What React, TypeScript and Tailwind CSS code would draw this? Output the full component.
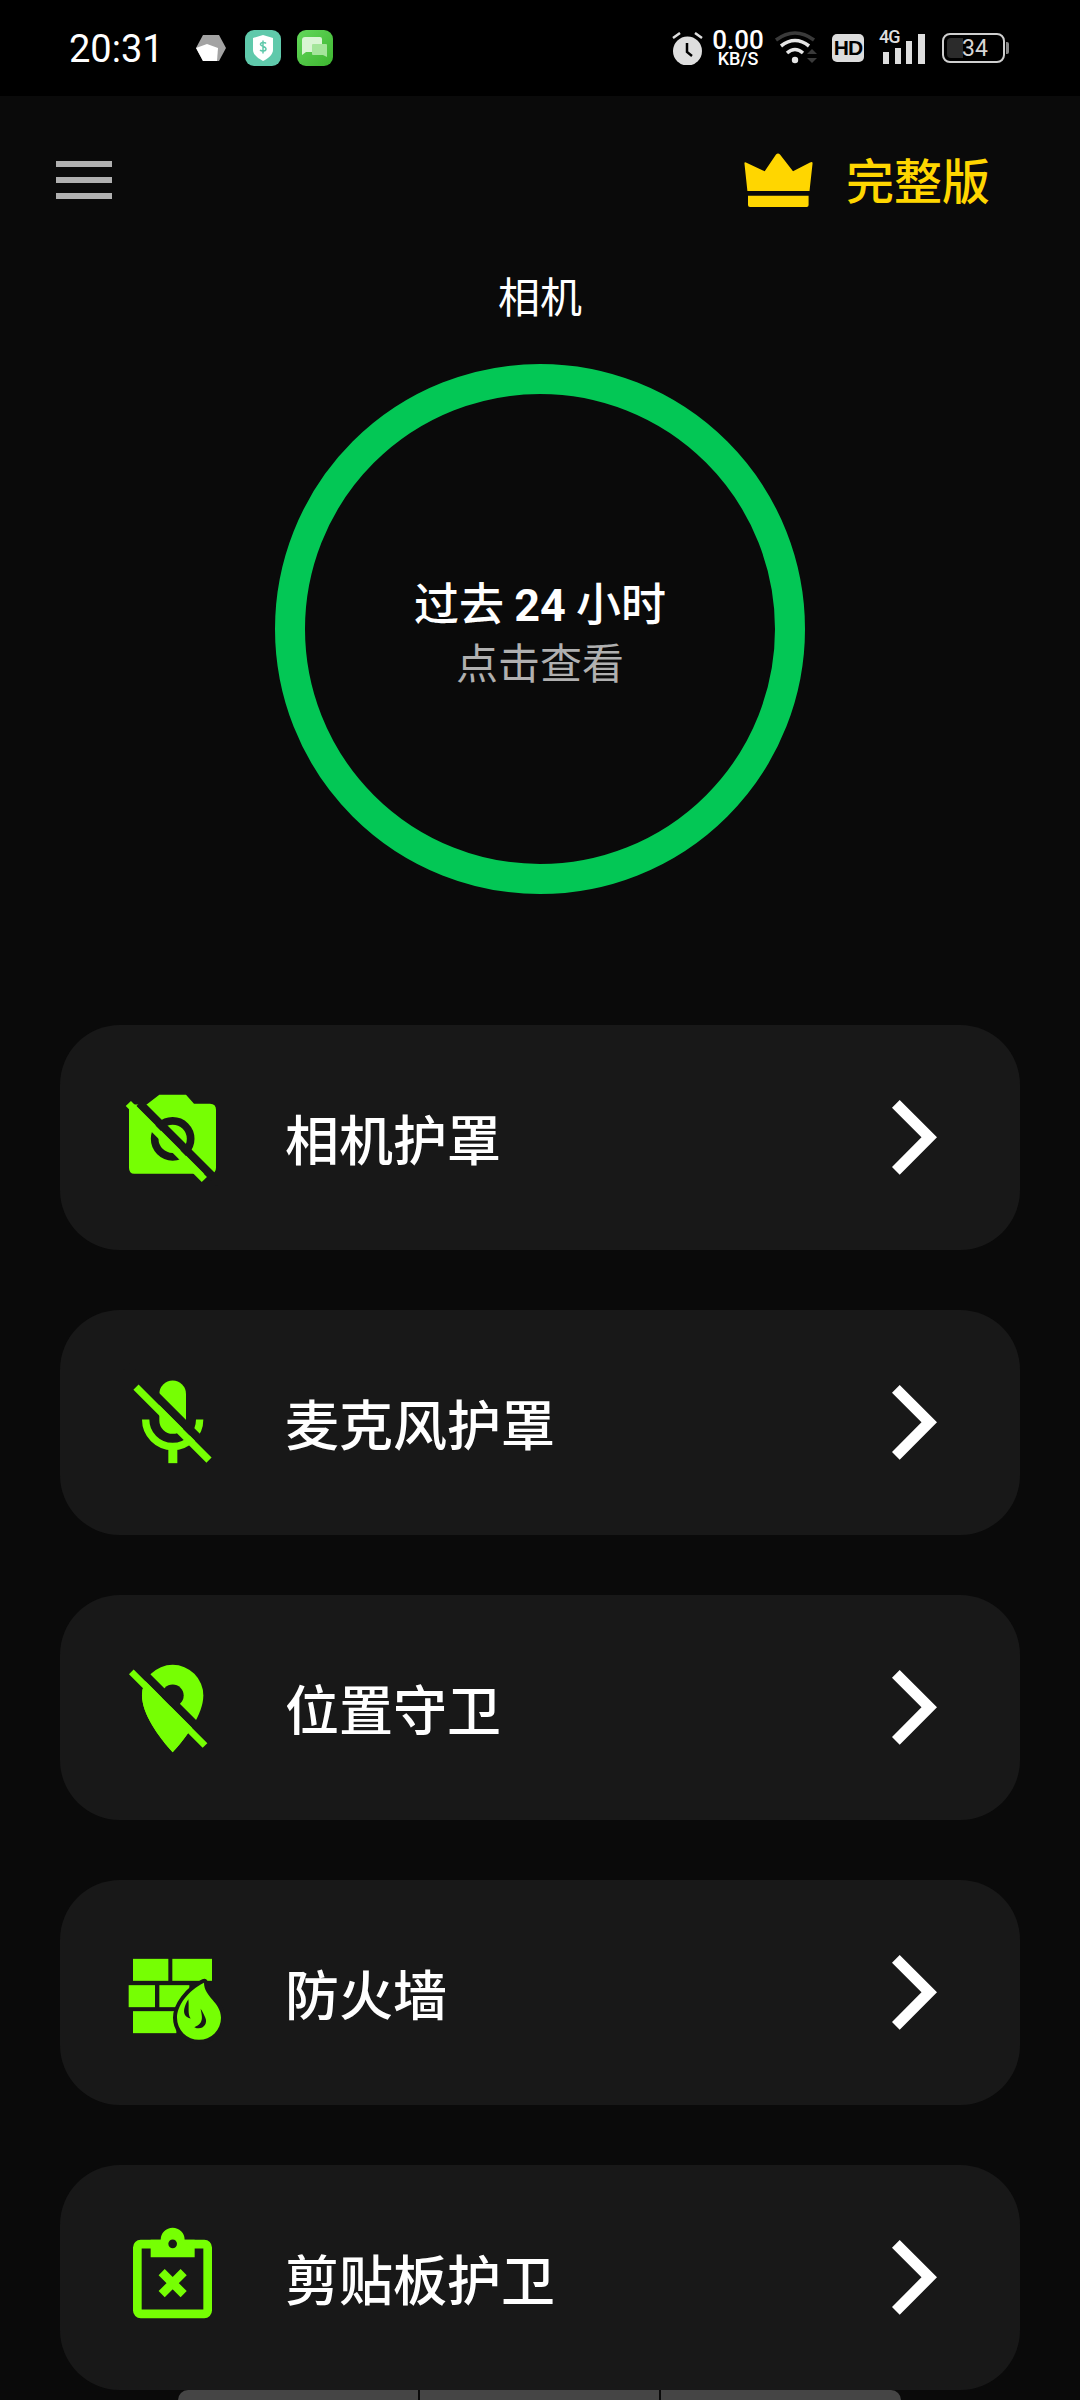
import React from "react";

const G = "#76FF03";
const C = "#181818";

function CameraIcon() {
  return (
    <svg viewBox="180 142.5 360 360" className="w-[120px] h-[120px] shrink-0">
      <path d="M298 193H378L402 220H450Q468 220 468 238V412Q468 430 450 430H223Q207 430 207 412V222H260Z" fill={G} />
      <circle cx="338" cy="325" r="54" fill="none" stroke={C} strokeWidth="23" />
      <line x1="238" y1="218" x2="478" y2="458" stroke={C} strokeWidth="25" />
      <line x1="205" y1="219" x2="433" y2="447" stroke={G} strokeWidth="22" />
    </svg>
  );
}

function MicIcon() {
  return (
    <svg viewBox="180 127.5 360 360" className="w-[120px] h-[120px] shrink-0">
      <rect x="298" y="180" width="80" height="160" rx="40" fill={G} />
      <path d="M257 297A81 81 0 0 0 419 297" fill="none" stroke={G} strokeWidth="22" />
      <rect x="325" y="378" width="27" height="50" fill={G} />
      <line x1="200" y1="138" x2="440" y2="378" stroke={C} strokeWidth="25" />
      <line x1="228" y1="200" x2="447" y2="419" stroke={G} strokeWidth="22" />
    </svg>
  );
}

function PinIcon() {
  return (
    <svg viewBox="180 142.5 360 360" className="w-[120px] h-[120px] shrink-0">
      <defs>
        <clipPath id="pinLower">
          <polygon points="160,146 480,466 160,466" />
        </clipPath>
      </defs>
      <path d="M338 193A92 92 0 0 1 430 285C430 340 380 410 338 455C296 410 246 340 246 285A92 92 0 0 1 338 193Z" fill={G} />
      <circle cx="338" cy="285" r="33" fill={C} />
      <path clipPath="url(#pinLower)" d="M338 193A92 92 0 0 1 430 285C430 340 380 410 338 455C296 410 246 340 246 285A92 92 0 0 1 338 193Z" fill={G} />
      <line x1="205" y1="173" x2="440" y2="408" stroke={C} strokeWidth="25" />
      <line x1="214" y1="214" x2="435" y2="435" stroke={G} strokeWidth="20" />
    </svg>
  );
}

function WallIcon() {
  return (
    <svg viewBox="180 97.5 360 360" className="w-[120px] h-[120px] shrink-0">
      <rect x="219" y="175" width="106" height="66" fill={G} />
      <rect x="337" y="175" width="119" height="66" fill={G} />
      <rect x="206" y="254" width="79" height="66" fill={G} />
      <rect x="298" y="254" width="90" height="66" fill={G} />
      <rect x="219" y="332" width="130" height="66" fill={G} />
      <path d="M432 247C432 290 483 305 483 352A66 66 0 0 1 351 352C351 315 385 270 432 247Z" fill={C} stroke={C} strokeWidth="24" strokeLinejoin="round" />
      <path d="M432 247C432 290 483 305 483 352A66 66 0 0 1 351 352C351 315 385 270 432 247Z" fill={G} />
      <path d="M385 296C372 318 362 346 392 354C382 340 388 320 385 296Z" fill={C} />
      <path d="M422 325C425 345 435 368 403 380C425 392 445 372 436 352C432 342 428 335 422 325Z" fill={C} />
    </svg>
  );
}

function ClipIcon() {
  return (
    <svg viewBox="180 82.5 360 360" className="w-[120px] h-[120px] shrink-0">
      <rect x="232" y="161" width="211" height="209" rx="10" fill="none" stroke={G} strokeWidth="26" />
      <path d="M272 148H302A36 36 0 0 1 374 148H404V200H272Z" fill={G} />
      <circle cx="338" cy="160" r="13" fill={C} />
      <path d="M305 245L371 311M371 245L305 311" stroke={G} strokeWidth="26" fill="none" />
    </svg>
  );
}

function Chevron() {
  return (
    <svg viewBox="0 0 45 75" className="w-[45px] h-[75px] shrink-0">
      <polygon points="7.7,0 45,37.3 7.7,74.7 0,67 29.5,37.3 0,7.7" fill="#ffffff" />
    </svg>
  );
}

const items: [React.ReactNode, string][] = [
  [<CameraIcon />, "相机护罩"],
  [<MicIcon />, "麦克风护罩"],
  [<PinIcon />, "位置守卫"],
  [<WallIcon />, "防火墙"],
  [<ClipIcon />, "剪贴板护卫"],
];

function StatusBar() {
  return (
    <div className="h-[96px] bg-black flex items-center justify-between pl-[69px] pr-[71px] shrink-0">
      <div className="flex items-center">
        <span className="text-[38px] leading-[40px] mt-[2px] text-white w-[93px] font-['Roboto',sans-serif]">20:31</span>
        <svg viewBox="0 0 30 26" className="w-[30px] h-[26px] ml-[34px]">
          <polygon points="7,0 23,0 30,13 23,26 7,26 0,13" fill="#a3a3a3" />
          <polygon points="0,13 11,9 22,13 21,26 7,26" fill="#ffffff" />
        </svg>
        <div className="w-[36px] h-[36px] rounded-[9px] bg-[#5fc9ab] ml-[19px] flex items-center justify-center">
          <svg viewBox="0 0 22 26" className="w-[22px] h-[26px]">
            <path d="M1 3L11 0L21 3V15C21 20 15 24 11 26C7 24 1 20 1 15Z" fill="#ffffff" />
            <path d="M14 8.5C13 7 9 7 8.5 9C8 11.5 14 11 14 14C14 16.5 9.5 16.5 8 15M11 5.5V18.5" fill="none" stroke="#5fc9ab" strokeWidth="1.5" />
          </svg>
        </div>
        <div className="w-[36px] h-[36px] rounded-[9px] bg-gradient-to-br from-[#63d85a] to-[#3db52f] ml-[16px] flex items-center justify-center">
          <svg viewBox="0 0 26 26" className="w-[26px] h-[26px]">
            <path d="M3 2H18Q20 2 20 4V15Q20 17 18 17H4L0 20V5Q0 2 3 2Z" fill="#d9f5d3" />
            <path d="M11 9H24Q25 9 25 10V22L21 20H11Q10 20 10 19V10Q10 9 11 9Z" fill="#a4e59a" />
          </svg>
        </div>
      </div>
      <div className="flex items-center">
        <svg viewBox="0 0 31 33" className="w-[31px] h-[33px]">
          <circle cx="15.5" cy="19" r="14.5" fill="#dedede" />
          <path d="M15 11V20L20 24" fill="none" stroke="#000000" strokeWidth="2.5" />
          <path d="M1 6L8 1M30 6L23 1" stroke="#dedede" strokeWidth="2.5" />
        </svg>
        <div className="w-[54px] ml-[8px] flex flex-col items-center text-white font-['Roboto',sans-serif] font-medium">
          <span className="text-[26px] leading-[20px]">0.00</span>
          <span className="text-[18px] leading-[16px] mt-[1px]">KB/S</span>
        </div>
        <svg viewBox="0 0 44 34" className="w-[44px] h-[34px] ml-[9px]">
          <path d="M2 9Q21 -5 40 9" fill="none" stroke="#3a3a3a" strokeWidth="3.5" />
          <path d="M7 15Q21 4 35 15" fill="none" stroke="#e6e6e6" strokeWidth="3.5" />
          <path d="M13 22Q21 15 29 22" fill="none" stroke="#e6e6e6" strokeWidth="3.5" />
          <circle cx="21" cy="29" r="3.2" fill="#e6e6e6" />
          <polygon points="33,23 38,18 43,23" fill="#3a3a3a" />
          <polygon points="33,27 43,27 38,32" fill="#3a3a3a" />
        </svg>
        <div className="w-[32px] h-[28px] rounded-[5px] bg-[#dcdcdc] ml-[14px] flex items-center justify-center text-black text-[21px] leading-[28px] font-bold font-['Liberation_Sans',sans-serif] tracking-[-1px]">HD</div>
        <div className="w-[46px] h-[32px] ml-[16px] relative">
          <span className="absolute left-[-1px] top-[-4px] text-[18px] leading-[18px] font-medium text-[#dedede] font-['Roboto',sans-serif] tracking-[-1px]">4G</span>
          <div className="h-full flex items-end gap-[5.5px] pl-[3px]">
            <div className="w-[6px] h-[12px] bg-[#dedede]" />
            <div className="w-[6px] h-[16px] bg-[#dedede]" />
            <div className="w-[6px] h-[23px] bg-[#dedede]" />
            <div className="w-[7px] h-[30px] bg-[#dedede]" />
          </div>
        </div>
        <div className="ml-[16px] flex items-center">
          <div className="w-[63px] h-[30px] rounded-[8px] border-2 border-[#cfcfcf] p-[3px] relative">
            <div className="w-[16px] h-full rounded-l-[4px] bg-[#2b2b2b]" />
            <span className="absolute inset-0 flex items-center justify-center pl-[3px] text-[#d6d6d6] text-[23px] leading-none font-['Roboto',sans-serif]">34</span>
          </div>
          <div className="w-[3px] h-[12px] ml-[1px] rounded-r-[2px] bg-[#8a8a8a]" />
        </div>
      </div>
    </div>
  );
}

export default function App() {
  return (
    <div className="w-[1080px] h-[2400px] overflow-hidden bg-[#0a0a0a] flex flex-col font-['Noto_Sans_CJK_SC','Noto_Sans',sans-serif]">
      <StatusBar />
      <div className="flex items-center justify-between pl-[56px] pr-[90px] h-[60px] mt-[54px] shrink-0">
        <div className="flex flex-col gap-[10px]">
          <div className="w-[56px] h-[6px] bg-[#b0b0b0]" />
          <div className="w-[56px] h-[6px] bg-[#b0b0b0]" />
          <div className="w-[56px] h-[6px] bg-[#b0b0b0]" />
        </div>
        <div className="flex items-center">
          <svg viewBox="0 0 69 54" className="w-[69px] h-[54px]">
            <path d="M0.5 11Q0 8 3 10L20.7 18.3L32 1.5Q34 -0.5 36 1.5L49 18.3L66 9.5Q69 8 68.5 11L65.5 38H3.4Z" fill="#FFD600" />
            <path d="M4 42.7H64.6V52Q64.6 54 62.6 54H6Q4 54 4 52Z" fill="#FFD600" />
          </svg>
          <span className="ml-[33px] mb-[4px] text-[48px] leading-[60px] font-medium text-[#FFD600]">完整版</span>
        </div>
      </div>
      <div className="mt-[55px] h-[60px] text-center text-[42px] leading-[60px] text-white shrink-0">相机</div>
      <div className="mt-[39px] w-[530px] h-[530px] mx-auto rounded-full border-[30px] border-[#03C755] flex flex-col items-center justify-center pt-[4px] shrink-0">
        <span className="text-[45px] leading-[55px] font-medium text-white">
          过去 <span className="font-bold font-['Roboto',sans-serif]">24</span> 小时
        </span>
        <span className="text-[42px] leading-[55px] text-[#b0b0b0]">点击查看</span>
      </div>
      <div className="mt-[131px] mx-[60px] flex flex-col gap-[60px] shrink-0">
        {items.map(([icon, label], i) => (
          <div key={i} className="h-[225px] rounded-[60px] bg-[#181818] flex items-center pl-[60px] pr-[83px]">
            {icon}
            <span className="ml-[45px] flex-1 text-[54px] leading-[70px] font-medium text-white">{label}</span>
            <Chevron />
          </div>
        ))}
      </div>
      <div className="h-[10px] w-[723px] ml-[178px] flex gap-[2px] shrink-0">
        <div className="flex-1 bg-[#454545] rounded-tl-[10px]" />
        <div className="flex-1 bg-[#454545]" />
        <div className="flex-1 bg-[#454545] rounded-tr-[10px]" />
      </div>
    </div>
  );
}
